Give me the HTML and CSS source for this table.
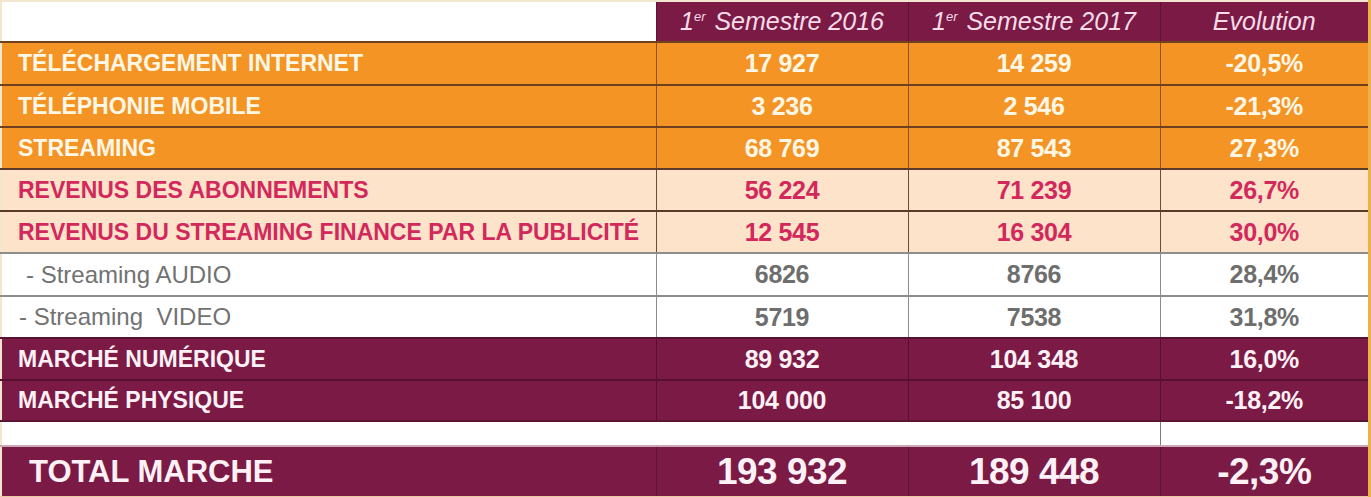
FILE: index.html
```html
<!DOCTYPE html>
<html lang="fr">
<head>
<meta charset="utf-8">
<title>Marché de la musique</title>
<link rel="stylesheet" href="styles.css">
</head>
<body>
<table class="market">
  <colgroup>
    <col class="c-label">
    <col class="c-num">
    <col class="c-num">
    <col class="c-evo">
  </colgroup>
  <thead>
    <tr class="head">
      <th class="blank"></th>
      <th>1<sup>er</sup> Semestre 2016</th>
      <th>1<sup>er</sup> Semestre 2017</th>
      <th>Evolution</th>
    </tr>
  </thead>
  <tbody>
    <tr class="orange r43"><td class="label">TÉLÉCHARGEMENT INTERNET</td><td>17 927</td><td>14 259</td><td>-20,5%</td></tr>
    <tr class="orange"><td class="label">TÉLÉPHONIE MOBILE</td><td>3 236</td><td>2 546</td><td>-21,3%</td></tr>
    <tr class="orange"><td class="label">STREAMING</td><td>68 769</td><td>87 543</td><td>27,3%</td></tr>
    <tr class="peach"><td class="label">REVENUS DES ABONNEMENTS</td><td>56 224</td><td>71 239</td><td>26,7%</td></tr>
    <tr class="peach"><td class="label">REVENUS DU STREAMING FINANCE PAR LA PUBLICITÉ</td><td>12 545</td><td>16 304</td><td>30,0%</td></tr>
    <tr class="sub r43"><td class="label indent">- Streaming AUDIO</td><td>6826</td><td>8766</td><td>28,4%</td></tr>
    <tr class="sub"><td class="label">- Streaming&nbsp; VIDEO</td><td>5719</td><td>7538</td><td>31,8%</td></tr>
    <tr class="maroon"><td class="label">MARCHÉ NUMÉRIQUE</td><td>89 932</td><td>104 348</td><td>16,0%</td></tr>
    <tr class="maroon r41"><td class="label">MARCHÉ PHYSIQUE</td><td>104 000</td><td>85 100</td><td>-18,2%</td></tr>
    <tr class="spacer"><td></td><td></td><td></td><td class="sep"></td></tr>
    <tr class="total"><td class="label">TOTAL MARCHE</td><td>193 932</td><td>189 448</td><td>-2,3%</td></tr>
  </tbody>
</table>
</body>
</html>
```

FILE: styles.css
```css
html, body {
  margin: 0;
  padding: 0;
  background: #ffffff;
}

.market {
  width: 1371px;
  border-collapse: collapse;
  table-layout: fixed;
  font-family: "Liberation Sans", Arial, sans-serif;
  border-left: 2px solid #f3e6cf;
  border-right: 3px solid #e9b24a;
}

.c-label { width: 655px; }
.c-num { width: 252px; }
.c-evo { width: auto; }

.market th,
.market td {
  padding: 0;
  text-align: center;
  vertical-align: middle;
  white-space: nowrap;
}

.market td {
  font-weight: bold;
  font-size: 25px;
  letter-spacing: -0.3px;
}

.market td.label {
  text-align: left;
  padding-left: 16px;
  font-size: 23px;
  letter-spacing: 0;
}

/* header */
.head {
  height: 41px;
}
.head th {
  background: #7a1a45;
  color: #f4dce8;
  font-style: italic;
  font-weight: normal;
  font-size: 25px;
  border-left: 1px solid #5e1234;
  border-top: 2px solid #f3e6cf;
}
.head th.blank {
  background: #ffffff;
  border-left: none;
}
.head sup {
  font-size: 13px;
  vertical-align: 9px;
  margin-right: 2px;
}

.market tbody tr { height: 42px; }
.market tbody tr.r43 { height: 43px; }
.market tbody tr.r41 { height: 41px; }

/* orange rows */
.orange td {
  background: #f39425;
  color: #fff7e6;
  border-top: 2px solid #6e4020;
  border-left: 1px solid #8a5226;
}

/* peach rows */
.peach td {
  background: #fde3ca;
  color: #d3285b;
  border-top: 2px solid #5b3a2a;
  border-left: 1px solid #6d4a3a;
}

/* grey sub rows */
.sub td {
  background: #ffffff;
  color: #6e6e6e;
  border-top: 2px solid #8d8d8d;
  border-left: 1px solid #8d8d8d;
}
.sub td.label {
  font-weight: normal;
  font-size: 24px;
  color: #727272;
  padding-left: 17px;
}
.sub td.label.indent {
  padding-left: 24px;
}

/* maroon rows */
.maroon td {
  background: #7a1a45;
  color: #fdf1f6;
  border-top: 2px solid #57102f;
  border-left: 1px solid #57102f;
}

/* spacer */
.market tbody tr.spacer {
  height: 25px;
}
.spacer td {
  background: #ffffff;
  border-top: 2px solid #5a1533;
}
.spacer td.sep {
  border-left: 1px solid #7b7b7b;
}

/* total */
.market tbody tr.total {
  height: 51px;
}
.total td {
  background: #7a1a45;
  color: #fdf1f6;
  font-size: 37px;
  letter-spacing: -0.5px;
  border-top: 2px solid #c9a7b3;
  border-left: 1px solid #5c1233;
  border-bottom: 2px solid #e9c9a0;
}
.total td.label {
  font-size: 31px;
  padding-left: 27px;
  letter-spacing: 0;
}

.market td:first-child,
.market th:first-child {
  border-left: none;
}
```
